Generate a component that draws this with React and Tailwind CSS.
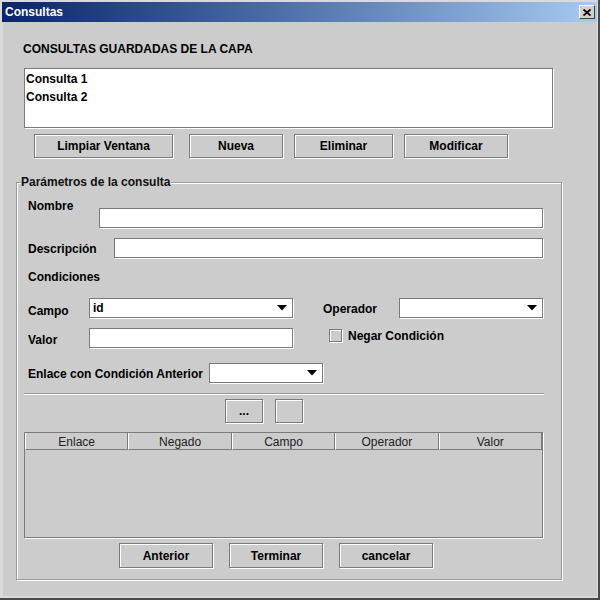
import React from 'react'

const btn =
  'flex items-center justify-center bg-[#cccccc] border border-[#7b7b7b] shadow-[inset_1px_1px_0_#ffffff,1px_1px_0_#ffffff] text-[12px] font-bold text-black'
const field = 'bg-white border border-[#7b7b7b] shadow-[1px_1px_0_#ffffff]'
const label = 'h-[14px] leading-[14px] text-[12px] font-bold text-black whitespace-nowrap'

function Combo({ value, className }) {
  return (
    <div className={`${field} flex h-[20px] items-center justify-between pl-[3px] pr-[5px] ${className}`}>
      <span className="text-[12px] font-bold leading-[14px] text-black">{value}</span>
      <svg width="10" height="6" viewBox="0 0 10 6">
        <path d="M0 0H10L5 5.5Z" fill="#000" />
      </svg>
    </div>
  )
}

const COLUMNS = ['Enlace', 'Negado', 'Campo', 'Operador', 'Valor']

export default function App() {
  return (
    <div className="flex h-[600px] w-[600px] flex-col border-b-2 border-r-2 border-[#4a4a4a] bg-[#dadada] pb-[2px] pl-[2px] pr-[1px] pt-[2px] font-['Liberation_Sans',Arial,sans-serif]">
      {/* title bar */}
      <div className="flex h-[20px] shrink-0 items-center justify-between bg-gradient-to-r from-[#0a246a] to-[#a6caf0] pl-[3px] pr-[2px]">
        <span className="text-[12px] font-bold leading-[14px] text-white">Consultas</span>
        <div className="flex h-[14px] w-[16px] items-center justify-center border border-b-[#404040] border-l-white border-r-[#404040] border-t-white bg-[#d4d0c8]">
          <svg width="8" height="7" viewBox="0 0 8 7">
            <path d="M0.5 0.5L7.5 6.5M7.5 0.5L0.5 6.5" stroke="#000" strokeWidth="1.8" />
          </svg>
        </div>
      </div>

      {/* body */}
      <div className="ml-[1px] flex flex-1 flex-col bg-[#cccccc]">
        <div className={`${label} ml-[20px] mt-[20px]`}>CONSULTAS GUARDADAS DE LA CAPA</div>

        <div className={`${field} ml-[21px] mt-[12px] h-[60px] w-[529px] pl-[1px] pt-[3px]`}>
          <div className="h-[18px] text-[12px] font-bold leading-[14px] text-black">Consulta 1</div>
          <div className="h-[18px] text-[12px] font-bold leading-[14px] text-black">Consulta 2</div>
        </div>

        <div className="ml-[31px] mt-[6px] flex h-[24px]">
          <div className={`${btn} w-[139px]`}>Limpiar Ventana</div>
          <div className={`${btn} ml-[16px] w-[94px]`}>Nueva</div>
          <div className={`${btn} ml-[11px] w-[99px]`}>Eliminar</div>
          <div className={`${btn} ml-[11px] w-[104px]`}>Modificar</div>
        </div>

        {/* Parámetros de la consulta */}
        <div className="relative ml-[13px] mt-[24px] flex h-[398px] w-[546px] flex-col border border-[#999999] shadow-[inset_1px_1px_0_#ffffff,1px_1px_0_#ffffff]">
          <span className="absolute -top-[8px] left-[4px] bg-[#cccccc] pr-[1px] text-[12px] font-bold leading-[14px] text-[#111]">
            Parámetros de la consulta
          </span>

          <div className="mt-[15px] flex items-start">
            <div className={`${label} ml-[11px] mt-[1px] w-[71px]`}>Nombre</div>
            <div className={`${field} mt-[10px] h-[20px] w-[444px]`} />
          </div>

          <div className="mt-[10px] flex h-[20px] items-center">
            <div className={`${label} ml-[11px] mt-[2px] w-[86px]`}>Descripción</div>
            <div className={`${field} h-[20px] w-[429px]`} />
          </div>

          <div className={`${label} ml-[11px] mt-[12px]`}>Condiciones</div>

          <div className="mt-[14px] flex items-start">
            <div className={`${label} ml-[11px] mt-[6px] w-[61px]`}>Campo</div>
            <Combo value="id" className="w-[204px]" />
            <div className={`${label} ml-[30px] mt-[4px] w-[76px]`}>Operador</div>
            <Combo value="" className="w-[144px]" />
          </div>

          <div className="mt-[10px] flex items-start">
            <div className={`${label} ml-[11px] mt-[5px] w-[61px]`}>Valor</div>
            <div className={`${field} h-[20px] w-[204px]`} />
            <div className="ml-[36px] mt-[1px] h-[13px] w-[13px] border border-[#7b7b7b] bg-[#cccccc] shadow-[inset_1px_1px_0_#ffffff,1px_1px_0_#ffffff]" />
            <div className={`${label} ml-[6px] mt-[1px]`}>Negar Condición</div>
          </div>

          <div className="mt-[15px] flex items-start">
            <div className={`${label} ml-[11px] mt-[4px] w-[181px]`}>Enlace con Condición Anterior</div>
            <Combo value="" className="w-[114px]" />
          </div>

          <div className="ml-[7px] mt-[10px] h-[2px] w-[520px] border-t border-b border-b-white border-t-[#999999]" />

          <div className="ml-[208px] mt-[4px] flex h-[24px]">
            <div className={`${btn} w-[38px]`}>...</div>
            <div className={`${btn} ml-[12px] w-[28px]`} />
          </div>

          {/* conditions table */}
          <div className="ml-[7px] mt-[9px] h-[106px] w-[519px] border border-[#7b7b7b] bg-[#cccccc] shadow-[1px_1px_0_#ffffff]">
            <div className="grid h-[17px] grid-cols-5">
              {COLUMNS.map((c) => (
                <div
                  key={c}
                  className="flex items-center justify-center border-b border-l border-r border-b-[#7b7b7b] border-l-white border-r-[#7b7b7b] pt-[2px] text-[12px] leading-[14px] text-[#222]"
                >
                  {c}
                </div>
              ))}
            </div>
          </div>

          <div className="ml-[102px] mt-[5px] flex h-[25px]">
            <div className={`${btn} w-[94px]`}>Anterior</div>
            <div className={`${btn} ml-[16px] w-[94px]`}>Terminar</div>
            <div className={`${btn} ml-[16px] w-[94px]`}>cancelar</div>
          </div>
        </div>
      </div>
    </div>
  )
}
